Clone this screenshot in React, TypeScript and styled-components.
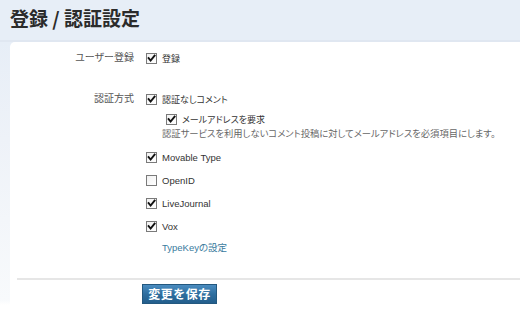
import React from 'react';
import styled, { createGlobalStyle } from 'styled-components';

const GlobalStyle = createGlobalStyle`
  html, body {
    margin: 0;
    padding: 0;
  }
  body {
    width: 520px;
    height: 314px;
    overflow: hidden;
    background: linear-gradient(
      to bottom,
      #e7eef7 0,
      #e7eef7 42px,
      #eef2f8 140px,
      #f8fafc 300px,
      #ffffff 305px
    );
    font-family: 'Liberation Sans', 'Noto Sans CJK JP', sans-serif;
    font-feature-settings: 'palt';
    color: #333;
  }
`;

type Option = {
  label: string;
  checked: boolean;
};

const providers: Option[] = [
  { label: 'Movable Type', checked: true },
  { label: 'OpenID', checked: false },
  { label: 'LiveJournal', checked: true },
  { label: 'Vox', checked: true },
];

const CheckBox: React.FC<{ checked: boolean }> = ({ checked }) => (
  <Box>
    {checked && (
      <svg width="9" height="9" viewBox="0 0 9 9">
        <path
          d="M1.6 4.2 L3.6 6.6 L7.6 1.6"
          fill="none"
          stroke="#111"
          strokeWidth="1.9"
          strokeLinecap="square"
        />
      </svg>
    )}
  </Box>
);

const App: React.FC = () => {
  return (
    <>
      <GlobalStyle />
      <Header>
        <h1>登録 / 認証設定</h1>
      </Header>
      <Panel>
        <Field>
          <Label>ユーザー登録</Label>
          <div>
            <Check $jp>
              <CheckBox checked />
              <span>登録</span>
            </Check>
          </div>
        </Field>
        <Field className="auth">
          <Label>認証方式</Label>
          <div>
            <Check $jp>
              <CheckBox checked />
              <span>認証なしコメント</span>
            </Check>
            <Nested>
              <Check $jp>
                <CheckBox checked />
                <span>メールアドレスを要求</span>
              </Check>
            </Nested>
            <Hint>
              認証サービスを利用しないコメント投稿に対してメールアドレスを必須項目にします。
            </Hint>
            {providers.map((p) => (
              <Check key={p.label} $spaced>
                <CheckBox checked={p.checked} />
                <span>{p.label}</span>
              </Check>
            ))}
            <Link href="#">TypeKeyの設定</Link>
          </div>
        </Field>
        <Footer>
          <SaveButton type="button">変更を保存</SaveButton>
        </Footer>
      </Panel>
    </>
  );
};

const Header = styled.div`
  height: 42px;
  padding: 0 10px;
  box-sizing: border-box;
  box-shadow: inset 0 -2px 0 #e0e7f1;

  h1 {
    margin: 0;
    font-family: 'Noto Sans CJK JP', sans-serif;
    font-size: 19px;
    font-weight: 700;
    line-height: 36px;
    color: #2b2b2b;
  }
`;

const Panel = styled.div`
  margin-left: 10px;
  padding-top: 9px;
  height: 262px;
  background: #fff;
  border-top-left-radius: 5px;
`;

const Field = styled.div`
  display: grid;
  grid-template-columns: 124px 1fr;
  column-gap: 12px;
  align-items: start;

  &.auth {
    margin-top: 27px;
  }
`;

const Label = styled.div`
  text-align: right;
  font-size: 10px;
  line-height: 14px;
  color: #555;
`;

const Check = styled.label<{ $spaced?: boolean; $jp?: boolean }>`
  display: flex;
  align-items: center;
  gap: 5px;
  height: 14px;
  font-size: ${({ $jp }) => ($jp ? '9px' : '9.5px')};
  color: #333;
  margin-top: ${({ $spaced }) => ($spaced ? '9px' : '0')};
`;

const Box = styled.span`
  width: 11px;
  height: 11px;
  box-sizing: border-box;
  border: 1px solid #7a7a7a;
  background: linear-gradient(135deg, #f1f1f1, #ffffff);
  display: inline-flex;
  align-items: center;
  justify-content: center;
  flex: none;
`;

const Nested = styled.div`
  margin-top: 6px;
  padding-left: 20px;
`;

const Hint = styled.div`
  margin-top: 1px;
  padding-left: 16px;
  font-size: 9.3px;
  line-height: 14px;
  color: #666;
  white-space: nowrap;
`;

const Link = styled.a`
  display: block;
  margin-top: 8px;
  padding-left: 16px;
  font-size: 9.5px;
  line-height: 14px;
  color: #3a7b9e;
  text-decoration: none;
`;

const Footer = styled.div`
  margin: 23px 0 0 7px;
  border-top: 2px solid #e6e6e6;
  padding: 4px 0 0 125px;
`;

const SaveButton = styled.button`
  width: 75px;
  height: 20px;
  padding: 0;
  border: 1px solid #23587f;
  background: linear-gradient(to bottom, #4a8cc0 0, #2e6e9f 50%, #235e8c 100%);
  color: #fff;
  font-family: 'Noto Sans CJK JP', sans-serif;
  font-size: 12px;
  font-weight: 700;
  line-height: 18px;
  letter-spacing: 0.5px;
  cursor: pointer;
`;

export default App;
